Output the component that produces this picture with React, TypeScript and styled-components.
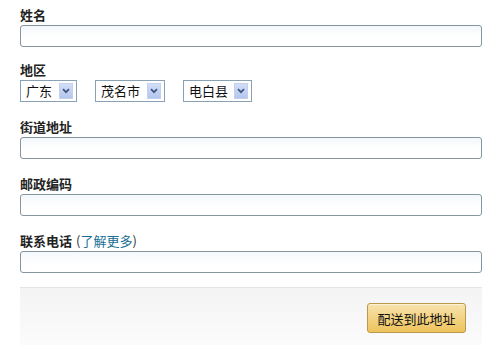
import styled, { createGlobalStyle } from "styled-components";

const GlobalStyle = createGlobalStyle`
  html, body {
    margin: 0;
    padding: 0;
    background: #ffffff;
  }
  body {
    font-family: "Noto Sans CJK SC", "Liberation Sans", sans-serif;
    color: #333333;
  }
`;

const Form = styled.form`
  width: 462px;
  padding: 7px 0 0 20px;
  display: flex;
  flex-direction: column;
`;

const Field = styled.div<{ after?: number }>`
  display: flex;
  flex-direction: column;
  margin-bottom: ${({ after = 17 }) => after}px;
`;

const Label = styled.label`
  font-size: 13px;
  font-weight: 700;
  line-height: 16px;
  height: 16px;
  margin-bottom: 2px;
  color: #222222;
  white-space: nowrap;
`;

const Hint = styled.span`
  font-weight: 400;
  color: #333333;
  margin-left: 4px;
`;

const HelpLink = styled.a`
  color: #1b6f93;
  text-decoration: none;
`;

const TextInput = styled.input`
  box-sizing: border-box;
  width: 462px;
  height: 22px;
  margin: 0;
  padding: 0 4px;
  border: 1px solid #8696a1;
  border-radius: 3px;
  background: linear-gradient(#f4f8fb, #ffffff 60%);
  font-size: 13px;
  outline: none;
`;

const SelectRow = styled.div`
  display: flex;
  gap: 18px;
`;

const SelectBox = styled.div<{ w: number }>`
  box-sizing: border-box;
  width: ${({ w }) => w}px;
  height: 22px;
  border: 1px solid #8aa0b3;
  background: #ffffff;
  display: flex;
  align-items: center;
  padding: 0 3px 0 5px;
`;

const NativeSelect = styled.select`
  appearance: none;
  -webkit-appearance: none;
  flex: 1;
  min-width: 0;
  border: none;
  background: transparent;
  padding: 0;
  margin: 0;
  font-family: "Noto Sans CJK SC", sans-serif;
  font-size: 13px;
  line-height: 18px;
  color: #111111;
  outline: none;
`;

const Arrow = styled.span`
  width: 14px;
  height: 16px;
  flex: none;
  background: linear-gradient(#d3def6, #b4c6ee);
  border: 1px solid #c1d0ee;
  box-sizing: border-box;
  display: flex;
  align-items: center;
  justify-content: center;
`;

const Footer = styled.div`
  width: 462px;
  height: 58px;
  box-sizing: border-box;
  border-top: 1px solid #e4e4e4;
  background: linear-gradient(#f4f4f4, #fbfbfb);
  display: flex;
  justify-content: flex-end;
  align-items: flex-start;
  padding: 15px 16px 0 0;
`;

const Submit = styled.button`
  width: 99px;
  height: 30px;
  box-sizing: border-box;
  border: 1px solid #b99a4b;
  border-radius: 3px;
  background: linear-gradient(#f8e3ad, #eec35c);
  box-shadow: inset 0 1px 0 rgba(255, 255, 255, 0.5);
  font-family: "Noto Sans CJK SC", sans-serif;
  font-size: 13px;
  color: #111111;
  padding: 0;
  cursor: pointer;
`;

const Chevron = () => (
  <svg width="8" height="6" viewBox="0 0 8 6">
    <path d="M1 1.2 L4 4.2 L7 1.2" fill="none" stroke="#3f5683" strokeWidth="1.8" />
  </svg>
);

const selects = [
  { value: "广东", width: 57 },
  { value: "茂名市", width: 70 },
  { value: "电白县", width: 69 },
];

export default function App() {
  return (
    <>
      <GlobalStyle />
      <Form onSubmit={(e) => e.preventDefault()}>
        <Field after={15}>
          <Label>姓名</Label>
          <TextInput type="text" />
        </Field>
        <Field>
          <Label>地区</Label>
          <SelectRow>
            {selects.map((s) => (
              <SelectBox key={s.value} w={s.width}>
                <NativeSelect defaultValue={s.value}>
                  <option>{s.value}</option>
                </NativeSelect>
                <Arrow>
                  <Chevron />
                </Arrow>
              </SelectBox>
            ))}
          </SelectRow>
        </Field>
        <Field>
          <Label>街道地址</Label>
          <TextInput type="text" />
        </Field>
        <Field>
          <Label>邮政编码</Label>
          <TextInput type="text" />
        </Field>
        <Field after={14}>
          <Label>
            联系电话
            <Hint>
              (<HelpLink href="#">了解更多</HelpLink>)
            </Hint>
          </Label>
          <TextInput type="text" />
        </Field>
        <Footer>
          <Submit type="submit">配送到此地址</Submit>
        </Footer>
      </Form>
    </>
  );
}
